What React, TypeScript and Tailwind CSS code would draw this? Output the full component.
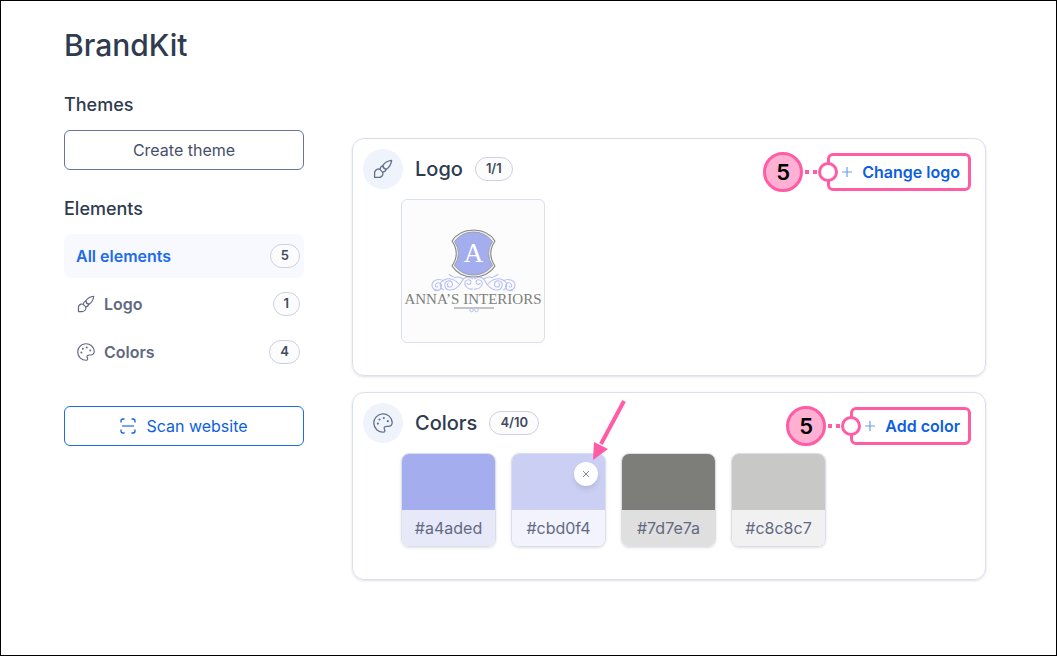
import type { ReactNode } from 'react'

interface IconProps {
  className?: string
}

function BrushIcon({ className }: IconProps) {
  return (
    <svg
      viewBox="0 0 20 20"
      className={className}
      fill="none"
      stroke="currentColor"
      strokeWidth="1.3"
      strokeLinejoin="round"
      aria-hidden="true"
    >
      <path d="M1.6 18.400v-4.400a4.200 4.200 0 0 1 2.900-3.900c1.100-.3 2.100 0 2.900.8l1.700 1.700c.9.900 1.100 2 .7 3.100a4.200 4.200 0 0 1-3.900 2.700z" />
      <path d="M7 10.400c.1-1.700 1-3 2.700-3.700.4 1.900 1.500 3.100 3.600 3.600-.6 1.800-1.900 2.700-3.700 2.800" />
      <path d="M9.700 6.700c1.900-3.100 4.800-4.800 8.900-5.300-.5 4.100-2.200 7-5.300 8.900-2.100-.5-3.200-1.700-3.600-3.600z" />
    </svg>
  )
}

function PaletteIcon({ className }: IconProps) {
  return (
    <svg
      viewBox="0 0 20 20"
      className={className}
      fill="none"
      stroke="currentColor"
      strokeWidth="1.3"
      strokeLinejoin="round"
      aria-hidden="true"
    >
      <path d="M10.300 19.200A9.200 9.200 0 1 1 19.200 9.400c-.1 2.700-1.700 4-4.200 3.900h-1.500c-1.900 0-2.700 1.200-2.200 2.600.3.900.7 1.500.5 2.300-.2.700-.7 1-1.500 1z" />
      <g fill="currentColor" stroke="none">
        <circle cx="4.900" cy="10.600" r="1.100" />
        <circle cx="6.500" cy="6.500" r="1.100" />
        <circle cx="10.800" cy="5" r="1.100" />
        <circle cx="14.800" cy="8.200" r="1.100" />
      </g>
    </svg>
  )
}

function ScanIcon() {
  return (
    <svg
      viewBox="0 0 16 16"
      className="size-4"
      fill="none"
      stroke="currentColor"
      strokeWidth="1.3"
      aria-hidden="true"
    >
      <path d="M1 4.500V3q0-2 2-2h1.500M11.500 1H13q2 0 2 2v1.500M15 11.500V13q0 2-2 2h-1.500M4.500 15H3q-2 0-2-2v-1.500" />
      <path d="M2 8h12" strokeWidth="1.500" opacity=".75" />
    </svg>
  )
}

function CompanyLogo() {
  return (
    <svg viewBox="0 0 142 142" className="size-full" role="img" aria-label="Anna's Interiors">
      <path
        d="M50 41Q57 30 71.500 30T93 41Q84.500 53.500 93 66Q86 77 71.500 77T50 66Q58.500 53.500 50 41z"
        fill="#ecedf3"
        stroke="#85867f"
        strokeWidth="1.100"
      />
      <path
        d="M52.500 41.500Q60 32 71.500 32T90.500 41.500Q82.500 53.500 90.500 65.500Q83 75 71.500 75T52.500 65.500Q60.500 53.500 52.500 41.500z"
        fill="#a4aded"
        stroke="#92949c"
        strokeWidth=".8"
      />
      <text x="71.500" y="62" textAnchor="middle" fill="#fff" fontSize="27" fontFamily="Liberation Serif, serif">
        A
      </text>
      <g fill="none" stroke="#b9c0f2" strokeWidth="1.100">
        <path
          id="scroll"
          d="M71 89c-6 1-9-4-8-7s6-3 6 0-4 3-4 1M71 79c-5-3-9-2-11 2s-6 9-12 9-7-8-2-9 6 6 2 6-3-4-1-4M58 85c-4-5-10-8-16-5s-4 9 0 10M42 81c-5-3-12-1-12 4s7 7 9 3-3-7-5-4 1 4 2 2M39 88c-1 3-5 3-7 2M52 77c-2-1-4-1-5-3M61 79c-4-3-7-2-9-1"
        />
        <use href="#scroll" transform="translate(143 0) scale(-1 1)" />
      </g>
      <text x="71" y="104" textAnchor="middle" fill="#7d7e7a" fontSize="15" fontFamily="Liberation Serif, serif">
        ANNA’S INTERIORS
      </text>
      <path d="M52 108h40" stroke="#7d7e7a" strokeWidth=".9" />
      <g fill="none" stroke="#b9c0f2">
        <circle cx="69.500" cy="110" r="1.800" />
        <circle cx="74.500" cy="110" r="1.800" />
      </g>
    </svg>
  )
}

function Count({ children }: { children: ReactNode }) {
  return (
    <span className="flex h-6 items-center rounded-full border border-[#cbd1e3] bg-[#fcfcfd] px-[10px] text-[13px] font-semibold text-[#404a5e]">
      {children}
    </span>
  )
}

function Callout({ label }: { label: string }) {
  return (
    <div className="mr-1 mt-[3px] flex items-center">
      <span className="flex size-10 items-center justify-center rounded-full border-[3px] border-[#ff5ca5] bg-[#ffb0d3] text-[22px] font-semibold text-black">
        5
      </span>
      <span className="flex w-[15px] justify-center gap-1">
        <span className="size-1 bg-[#ff5ca5]" />
        <span className="size-1 bg-[#ff5ca5]" />
      </span>
      <span className="z-10 -mr-[11px] size-5 rounded-full border-[3px] border-[#ff5ca5] bg-white" />
      <button
        type="button"
        className="flex h-[38px] items-center gap-[10px] rounded-md border-[3px] border-[#ff5ca5] pl-3 pr-2 text-base font-semibold text-[#0c5fe0]"
      >
        <svg viewBox="0 0 10 10" className="size-[10px]" stroke="#6a9fef" strokeWidth="1.200" aria-hidden="true">
          <path d="M5 0v10M0 5h10" />
        </svg>
        {label}
      </button>
    </div>
  )
}

interface SectionProps {
  icon: ReactNode
  title: string
  count: string
  action: string
  children: ReactNode
}

function Section({ icon, title, count, action, children }: SectionProps) {
  return (
    <section className="rounded-xl border border-[#d9dfeb] px-[10px] pt-[10px] pb-8 shadow-sm">
      <div className="flex h-10 items-start justify-between">
        <div className="flex items-center gap-3">
          <span className="flex size-10 items-center justify-center rounded-full bg-[#eff3fb] text-[#66708a]">
            {icon}
          </span>
          <h2 className="text-xl font-medium text-[#2f3b4f]">{title}</h2>
          <Count>{count}</Count>
        </div>
        <Callout label={action} />
      </div>
      <div className="mt-[10px] pl-[38px]">{children}</div>
    </section>
  )
}

const swatches = [
  { hex: '#a4aded', top: 'bg-[#a4aded]', bottom: 'bg-[#e7e9f9]' },
  { hex: '#cbd0f4', top: 'bg-[#cbcff4]', bottom: 'bg-[#f2f3fd]', removable: true },
  { hex: '#7d7e7a', top: 'bg-[#7d7e79]', bottom: 'bg-[#dfdfdf]' },
  { hex: '#c8c8c7', top: 'bg-[#c8c8c6]', bottom: 'bg-[#f1f1f1]' },
]

const elements = [
  { name: 'Logo', count: 1, icon: <BrushIcon className="size-[18px]" /> },
  { name: 'Colors', count: 4, icon: <PaletteIcon className="size-[18px]" /> },
]

export default function App() {
  return (
    <div className="min-h-screen border border-black bg-white pt-[26px] pr-[70px] pb-8 pl-[63px] font-['Inter',sans-serif]">
      <h1 className="text-[30px] leading-9 font-medium text-[#2f3b4f]">BrandKit</h1>
      <div className="mt-[30px] flex gap-12">
        <aside className="w-60 shrink-0">
          <h2 className="text-lg leading-6 font-medium text-[#2f3b4f]">Themes</h2>
          <button
            type="button"
            className="mt-[13px] h-10 w-full rounded-md border border-[#69739b] text-base text-[#47506a]"
          >
            Create theme
          </button>
          <h2 className="mt-[27px] text-lg leading-6 font-medium text-[#2f3b4f]">Elements</h2>
          <nav className="mt-[13px] flex flex-col gap-1 text-base font-semibold">
            <a
              href="#all"
              className="flex h-11 items-center justify-between rounded-lg bg-[#f7f9fe] pr-1 pl-3 text-[#1d6bea]"
            >
              All elements
              <Count>5</Count>
            </a>
            {elements.map((item) => (
              <a
                key={item.name}
                href={`#${item.name.toLowerCase()}`}
                className="flex h-11 items-center pr-1 pl-3 text-[#5f6982]"
              >
                <span className="flex w-5 justify-center">{item.icon}</span>
                <span className="ml-2 flex-1">{item.name}</span>
                <Count>{item.count}</Count>
              </a>
            ))}
          </nav>
          <button
            type="button"
            className="mt-8 flex h-10 w-full items-center justify-center gap-[10px] rounded-md border border-[#1d6bea] text-base text-[#0c5fe0]"
          >
            <ScanIcon />
            Scan website
          </button>
        </aside>
        <main className="flex min-w-0 flex-1 flex-col gap-4 pt-[45px]">
          <Section icon={<BrushIcon className="size-5" />} title="Logo" count="1/1" action="Change logo">
            <div className="size-36 rounded-md border border-[#d9dfeb] bg-[#fcfcfd]">
              <CompanyLogo />
            </div>
          </Section>
          <Section icon={<PaletteIcon className="size-5" />} title="Colors" count="4/10" action="Add color">
            <div className="flex flex-wrap gap-[15px]">
              {swatches.map((swatch) => (
                <div
                  key={swatch.hex}
                  className="relative flex h-[94px] w-[95px] flex-col rounded-lg border border-[#d9dfeb] shadow-sm"
                >
                  <div className={`h-14 rounded-t-[7px] ${swatch.top}`} />
                  <div
                    className={`flex flex-1 items-center justify-center rounded-b-[7px] text-base text-[#626a82] ${swatch.bottom}`}
                  >
                    {swatch.hex}
                  </div>
                  {swatch.removable && (
                    <>
                      <button
                        type="button"
                        aria-label="Remove color"
                        className="absolute top-2 right-[7px] flex size-6 items-center justify-center rounded-full bg-white shadow-md"
                      >
                        <svg viewBox="0 0 6 6" className="size-[6px]" stroke="#8189a0" aria-hidden="true">
                          <path d="M0 0l6 6M6 0L0 6" />
                        </svg>
                      </button>
                      <svg
                        viewBox="0 0 36 60"
                        className="absolute -top-[54px] left-[80px] h-[60px] w-9"
                        aria-hidden="true"
                      >
                        <path d="M32 1L9 44" stroke="#ff5ca5" strokeWidth="4" />
                        <path d="M1 60l1-18 14 7z" fill="#ff5ca5" />
                      </svg>
                    </>
                  )}
                </div>
              ))}
            </div>
          </Section>
        </main>
      </div>
    </div>
  )
}
